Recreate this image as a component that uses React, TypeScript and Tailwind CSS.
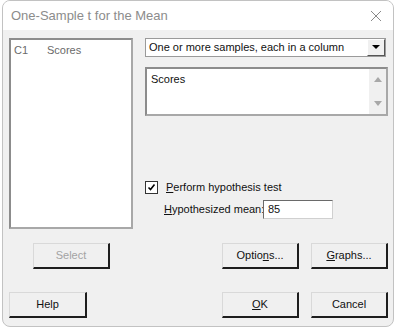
import React from 'react';

const font = { fontFamily: '"Liberation Sans", Arial, sans-serif' };

const Btn: React.FC<{ w?: string; disabled?: boolean; children: React.ReactNode }> = ({ w = 'w-[77px]', disabled, children }) => (
  <div className={`${w} h-[26px] border-t border-l border-t-[#d9d9d9] border-l-[#d9d9d9] border-b-2 border-r-2 border-b-[#1e1e1e] border-r-[#1e1e1e] bg-[#f0f0f0]`}>
    <div className={`h-full flex items-center justify-center text-[11px] ${disabled ? 'text-[#a3a3a3]' : 'text-[#111]'}`}>
      {children}
    </div>
  </div>
);

export default function App() {
  return (
    <div className="w-[398px] h-[329px] bg-white pl-[2px]" style={font}>
      <div className="w-[392px] h-[327px] rounded-[8px] border border-[#c2c2c2] overflow-hidden flex flex-col bg-[#f0f0f0]">
        {/* title bar */}
        <div className="h-[29px] bg-white flex items-center justify-between pl-[8px] pr-[11px] shrink-0">
          <span className="text-[13px] text-[#8c8c8c]">One-Sample t for the Mean</span>
          <svg width="12" height="12" viewBox="0 0 12 12">
            <path d="M1 1 L11 11 M11 1 L1 11" stroke="#8a8a8a" strokeWidth="1" fill="none" />
          </svg>
        </div>

        <div className="flex flex-col pl-[6px] pt-[8px]">
          <div className="flex">
            {/* variable list */}
            <div className="w-[124px] h-[191px] bg-white border-2 border-t-[#8c8c8c] border-l-[#8c8c8c] border-b-[#a8a8a8] border-r-[#a8a8a8] px-[3px] pt-[2px]">
              <div className="flex text-[11px] text-[#6a6a6a]">
                <span className="w-[33px]">C1</span>
                <span>Scores</span>
              </div>
            </div>

            <div className="ml-[12px] w-[243px] flex flex-col">
              {/* combo */}
              <div className="w-[241px] h-[19px] bg-white border border-[#9a9a9a] flex items-center">
                <span className="flex-1 pl-[3px] text-[11px] text-[#111] whitespace-nowrap overflow-hidden">One or more samples, each in a column</span>
                <div className="w-[18px] h-[17px] bg-[#f0f0f0] border-t border-l border-white border-b border-r border-b-[#555] border-r-[#555] flex items-center justify-center">
                  <svg width="8" height="5" viewBox="0 0 8 5">
                    <path d="M0 0 L8 0 L4 4 Z" fill="#000" />
                  </svg>
                </div>
              </div>

              {/* columns box */}
              <div className="mt-[10px] w-[243px] h-[49px] bg-white border-2 border-t-[#8c8c8c] border-l-[#8c8c8c] border-b-[#a8a8a8] border-r-[#a8a8a8] flex">
                <span className="flex-1 pl-[4px] pt-[2px] text-[11px] text-[#111]">Scores</span>
                <div className="w-[17px] h-full bg-[#f0f0f0] flex flex-col items-center justify-between py-[8px]">
                  <svg width="8" height="5" viewBox="0 0 8 5">
                    <path d="M0 5 L8 5 L4 0 Z" fill="#a8a8a8" />
                  </svg>
                  <svg width="8" height="5" viewBox="0 0 8 5">
                    <path d="M0 0 L8 0 L4 5 Z" fill="#a8a8a8" />
                  </svg>
                </div>
              </div>

              {/* hypothesis test */}
              <div className="mt-[65px] flex items-center h-[13px]">
                <div className="w-[13px] h-[13px] bg-white border border-[#333] flex items-center justify-center">
                  <svg width="9" height="9" viewBox="0 0 9 9">
                    <path d="M1.5 4.5 L3.5 6.5 L7.5 1.5" stroke="#000" strokeWidth="1.6" fill="none" />
                  </svg>
                </div>
                <span className="ml-[8px] text-[11px] text-[#111]">
                  <span className="underline">P</span>erform hypothesis test
                </span>
              </div>

              <div className="mt-[6px] flex items-center h-[19px] pl-[19px]">
                <span className="w-[99px] text-[11px] text-[#111] whitespace-nowrap">
                  <span className="underline">H</span>ypothesized mean:
                </span>
                <div className="w-[70px] h-[19px] bg-white border border-t-[#6a6a6a] border-l-[#6a6a6a] border-b-[#d0d0d0] border-r-[#d0d0d0] flex items-center pl-[4px] text-[11px] text-[#111]">
                  85
                </div>
              </div>
            </div>
          </div>

          {/* buttons row 1 */}
          <div className="mt-[14px] flex">
            <div className="ml-[24px]">
              <Btn disabled>Select</Btn>
            </div>
            <div className="ml-[112px]">
              <Btn>
                Optio<span className="underline">n</span>s...
              </Btn>
            </div>
            <div className="ml-[12px]">
              <Btn>
                <span className="underline">G</span>raphs...
              </Btn>
            </div>
          </div>

          {/* buttons row 2 */}
          <div className="mt-[23px] flex">
            <Btn w="w-[78px]">Help</Btn>
            <div className="ml-[135px]">
              <Btn>
                <span className="underline">O</span>K
              </Btn>
            </div>
            <div className="ml-[12px]">
              <Btn>Cancel</Btn>
            </div>
          </div>
        </div>
      </div>
    </div>
  );
}
